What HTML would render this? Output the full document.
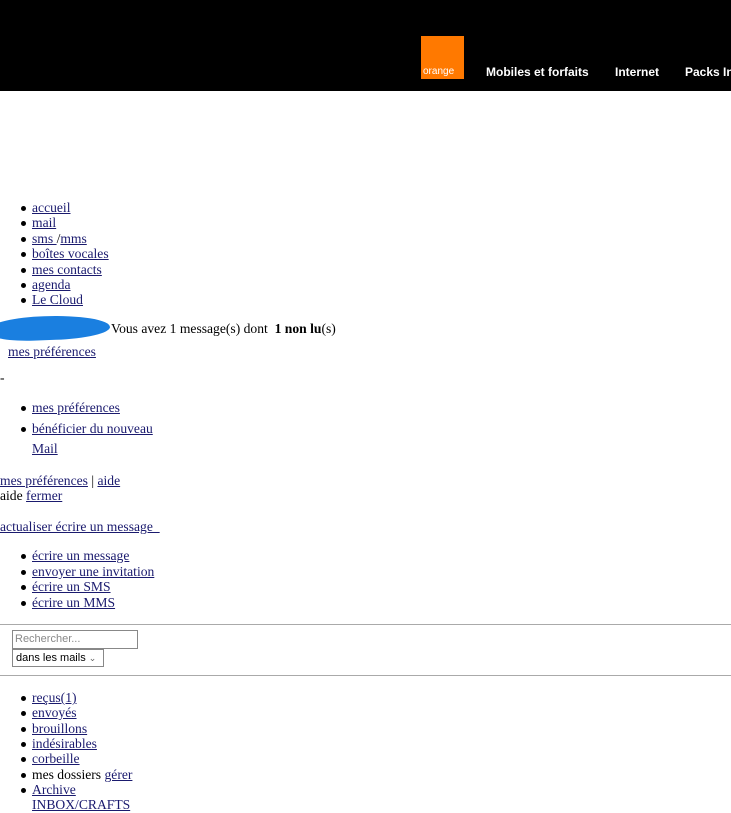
<!DOCTYPE html>
<html><head><meta charset="utf-8"><style>
body{margin:0;width:731px;height:804px;overflow:hidden;background:#fff;font-family:"Liberation Serif",serif;font-size:13.6px;color:#000;position:relative}
a{color:#1a1a6e;text-decoration:underline}
.t{position:absolute;white-space:nowrap;line-height:16px}
.b::before{content:"";position:absolute;left:-11px;top:6px;width:5px;height:5px;border-radius:50%;background:#000}
.hdr{position:absolute;left:0;top:0;width:731px;height:91px;background:#000}
.nav{position:absolute;top:65px;color:#fff;font-family:"Liberation Sans",sans-serif;font-weight:bold;font-size:12px;white-space:nowrap}
</style></head><body>
<div class="hdr"></div>
<div style="position:absolute;left:421px;top:36px;width:43px;height:43px;background:#ff7900"></div>
<div style="position:absolute;left:423px;top:66px;color:#fff;font-family:'Liberation Sans',sans-serif;font-size:10px">orange</div>
<div class="nav" style="left:486px">Mobiles et forfaits</div>
<div class="nav" style="left:615px">Internet</div>
<div class="nav" style="left:685px">Packs In</div>

<div class="t b" style="left:32px;top:200px"><a>accueil</a></div>
<div class="t b" style="left:32px;top:215px"><a>mail</a></div>
<div class="t b" style="left:32px;top:231px"><a>sms </a>/<a>mms</a></div>
<div class="t b" style="left:32px;top:246px"><a>boîtes vocales</a></div>
<div class="t b" style="left:32px;top:262px"><a>mes contacts</a></div>
<div class="t b" style="left:32px;top:277px"><a>agenda</a></div>
<div class="t b" style="left:32px;top:292px"><a>Le Cloud</a></div>

<div style="position:absolute;left:-10px;top:316px;width:120px;height:24px;background:#1a7fe0;border-radius:50% 60% 50% 40%;transform:rotate(-2deg)"></div>
<div class="t" style="left:111px;top:321px">Vous avez 1 message(s) dont &nbsp;<b>1 non lu</b>(s)</div>
<div class="t" style="left:8px;top:344px"><a>mes préférences</a></div>
<div class="t" style="left:0;top:370px">-</div>
<div class="t b" style="left:32px;top:400px"><a>mes préférences</a></div>
<div class="t b" style="left:32px;top:421px"><a>bénéficier du nouveau</a></div>
<div class="t" style="left:32px;top:441px"><a>Mail</a></div>
<div class="t" style="left:0;top:473px"><a>mes préférences</a> | <a>aide</a></div>
<div class="t" style="left:0;top:488px">aide <a>fermer</a></div>
<div class="t" style="left:0;top:519px"><a>actualiser écrire un message&nbsp;&nbsp;</a></div>
<div class="t b" style="left:32px;top:548px"><a>écrire un message</a></div>
<div class="t b" style="left:32px;top:564px"><a>envoyer une invitation</a></div>
<div class="t b" style="left:32px;top:579px"><a>écrire un SMS</a></div>
<div class="t b" style="left:32px;top:595px"><a>écrire un MMS</a></div>

<div style="position:absolute;left:0;top:624px;width:740px;height:50px;border:1px solid #aaa;border-left:none"></div>
<div style="position:absolute;left:12px;top:630px;font-family:'Liberation Sans',sans-serif;font-size:11px;color:#888;line-height:17px;padding-left:2px;box-sizing:border-box;width:126px;height:19px;border:1px solid #888">Rechercher...</div>
<div style="position:absolute;left:12px;top:649px;width:92px;border:1px solid #888;font-family:'Liberation Sans',sans-serif;font-size:11px;line-height:16px;padding-left:3px;box-sizing:border-box;height:18px">dans les mails <span style="font-size:9px;color:#666">&#8964;</span></div>

<div class="t b" style="left:32px;top:690px"><a>reçus(1)</a></div>
<div class="t b" style="left:32px;top:705px"><a>envoyés</a></div>
<div class="t b" style="left:32px;top:721px"><a>brouillons</a></div>
<div class="t b" style="left:32px;top:736px"><a>indésirables</a></div>
<div class="t b" style="left:32px;top:751px"><a>corbeille</a></div>
<div class="t b" style="left:32px;top:767px">mes dossiers <a>gérer</a></div>
<div class="t b" style="left:32px;top:782px"><a>Archive</a></div>
<div class="t" style="left:32px;top:797px"><a>INBOX/CRAFTS</a></div>
</body></html>
